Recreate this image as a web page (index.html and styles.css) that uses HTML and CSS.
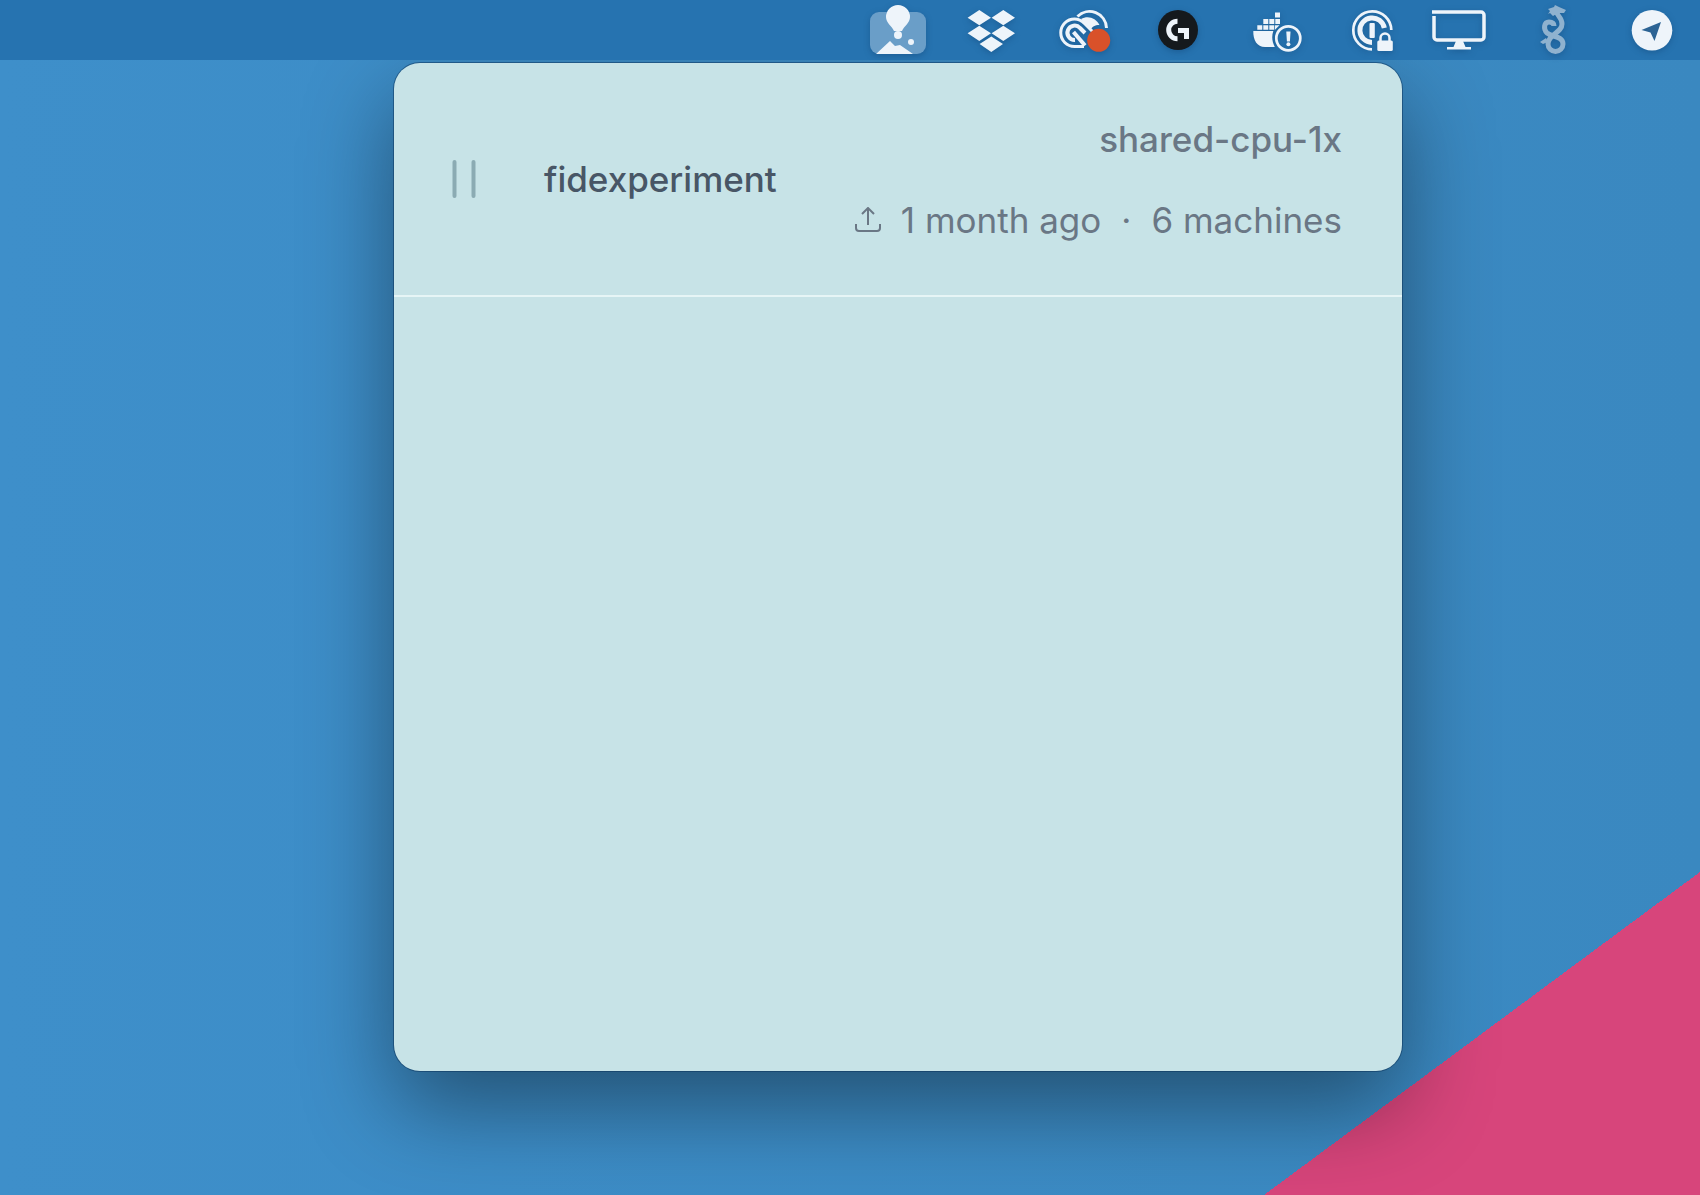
FILE: index.html
```html
<!DOCTYPE html>
<html lang="en">
<head>
    <meta charset="UTF-8">
    <meta name="viewport" content="width=device-width, initial-scale=1.0">
    <title>Menu bar apps</title>
    <link rel="stylesheet" href="styles.css">
</head>
<body>
    <header class="menubar">
        <!-- Balloon (open app) -->
        <button class="menubar-item" aria-label="Apps">
            <svg viewBox="0 0 64 60">
                <rect x="2" y="12" width="56" height="42" rx="9" fill="#6a9ec8"/>
                <path d="M8 54L22 41l5 5 5-1 13 9z"/>
                <path d="M30 5a12 12 0 0 1 12 12c0 6-6 9-8 14h-8c-2-5-8-8-8-14A12 12 0 0 1 30 5z"/>
                <circle cx="30" cy="35" r="4"/>
                <circle cx="43" cy="42" r="3"/>
            </svg>
        </button>
        <!-- Dropbox -->
        <button class="menubar-item" aria-label="Dropbox">
            <svg viewBox="0 0 64 60">
                <path d="M17.300 10l11.700 7.700-11.700 7.600-11.700-7.600zM41.300 10L53 17.700l-11.700 7.600-11.700-7.600zM17.300 25.700L29 33.300 17.300 41 5.600 33.300zM41.300 25.700L53 33.300 41.300 41l-11.700-7.700zM29.300 36.500L41 44l-11.700 8-11.700-8z"/>
            </svg>
        </button>
        <!-- Creative Cloud -->
        <button class="menubar-item" aria-label="Creative Cloud">
            <svg viewBox="0 0 64 60">
                <g fill="none" stroke="#eef4fa" stroke-width="3">
                    <path d="M28 46.500H18.500a13.700 13.700 0 0 1 0-27.500c4 0 7 1.500 10 4.500l8 8"/>
                    <path d="M21.500 16.500A17 17 0 0 1 50.500 28"/>
                    <path d="M19 40a7.200 7.200 0 1 1 5-12l5 5" stroke-width="4"/>
                    <path d="M17.500 32L29 45.500" stroke-width="4"/>
                </g>
                <path d="M25 19c7-4 15-1 18.500 6-5 0-7 2-8.500 4z"/>
                <circle cx="42.700" cy="40.300" r="11.500" fill="#d9512a"/>
            </svg>
        </button>
        <!-- Logitech G Hub -->
        <button class="menubar-item" aria-label="G Hub">
            <svg viewBox="0 0 64 60">
                <circle cx="28" cy="30" r="20" fill="#15191d"/>
                <path d="M27.500 18.700a11.300 11.300 0 0 0 0 22.600v-5a6.300 6.300 0 0 1 0-12.600zM28 28h11v11h-5v-6h-6z"/>
            </svg>
        </button>
        <!-- Docker -->
        <button class="menubar-item" aria-label="Docker">
            <svg viewBox="0 0 64 60">
                <path d="M13.300 25.300h5v4.400h-5zM19.300 25.300h5v4.400h-5zM25.300 25.300h5v4.400h-5zM31 25.300h4.500l-4.500 4.400zM19.300 19h5v5h-5zM25.300 19h5v5h-5zM31.300 19h4.700v5h-4.700zM31 12.500h5v5h-5z"/>
                <path d="M9.300 31h20c-2 6-1 11 1.500 16H21C13 47 9 40 9.300 31z"/>
                <circle cx="44.300" cy="38.300" r="12" fill="none" stroke="#eef4fa" stroke-width="2.700"/>
                <path d="M42.300 31.500h4.200l-.6 10h-3z"/>
                <circle cx="44.400" cy="44.300" r="2"/>
            </svg>
        </button>
        <!-- 1Password -->
        <button class="menubar-item" aria-label="1Password">
            <svg viewBox="0 0 64 60">
                <path d="M53.300 30A19 19 0 1 0 34 49.300" fill="none" stroke="#eef4fa" stroke-width="2.700"/>
                <path d="M46.300 28A12.300 12.300 0 1 0 34 42.500" fill="none" stroke="#eef4fa" stroke-width="5"/>
                <rect x="31.500" y="23" width="5.300" height="15" rx="1"/>
                <path d="M42.500 41v-3a4.500 4.500 0 0 1 9 0v3" fill="none" stroke="#eef4fa" stroke-width="2.500"/>
                <rect x="39.300" y="40.500" width="15.500" height="10.500" rx="1.500"/>
            </svg>
        </button>
        <!-- Display -->
        <button class="menubar-item" aria-label="Display">
            <svg viewBox="0 0 64 60">
                <path d="M0 12h49a3 3 0 0 1 3 3v22a3 3 0 0 1-3 3H5a3 3 0 0 1-3-3V16" fill="none" stroke="#eef4fa" stroke-width="3.500"/>
                <path d="M24 41h7l2.500 6H39v2.500H15V47h6.500z"/>
            </svg>
        </button>
        <!-- Wireguard -->
        <button class="menubar-item" aria-label="Wireguard">
            <svg viewBox="0 0 64 60">
                <path d="M30 11c1 5 6 6 6 13 0 9-14 10-14 20a7.500 7.500 0 0 0 15 0c0-8-11-7-16-11-4-4-3-11 2-11 3 0 5 1 5 4" fill="none" stroke="#8fb2cf" stroke-width="5"/>
                <path d="M22 9l6-2 1-2 4 2 7 3-2 3-6 0-5 3-3-3-2 1 2-3zM14 42l6-4 2 4-5 2z" fill="#8fb2cf"/>
            </svg>
        </button>
        <!-- Telegram -->
        <button class="menubar-item" aria-label="Telegram">
            <svg viewBox="0 0 64 60">
                <circle cx="32" cy="30.300" r="20.300"/>
                <path d="M41 22l-6.500 19-4-8.500L21.500 30z" fill="#2c6394"/>
            </svg>
        </button>
    </header>

    <main class="desktop">
        <section class="popover">
            <div class="app-row">
                <svg class="pause-icon" viewBox="0 0 24 38">
                    <path d="M2.500 2v34M21.500 2v34"/>
                </svg>
                <span class="app-name">fidexperiment</span>
                <div class="app-info">
                    <span class="app-size">shared-cpu-1x</span>
                    <div class="app-meta">
                        <svg class="upload-icon" viewBox="0 0 26 26">
                            <path d="M13 18V1M7 7l6-6 6 6M1 17v4a3 3 0 0 0 3 3h18a3 3 0 0 0 3-3v-4"/>
                        </svg>
                        <span>1 month ago</span>
                        <span>·</span>
                        <span>6 machines</span>
                    </div>
                </div>
            </div>
        </section>
    </main>
</body>
</html>
```
FILE: styles.css
```css
* {
    box-sizing: border-box;
}
body {
    margin: 0;
    min-height: 100vh;
    display: flex;
    flex-direction: column;
    font-family: Inter, "Liberation Sans", sans-serif;
    /* pink corner over the blue wallpaper */
    background:
        linear-gradient(to bottom right, transparent 50%, #d7457b 50%) right bottom / 436px 323px no-repeat,
        linear-gradient(to right, #3e8fca, #3a88c0);
}
.menubar {
    position: relative;
    z-index: 1;
    display: flex;
    justify-content: flex-end;
    gap: 30px;
    height: 60px;
    padding-right: 16px;
    background: #2673b0;
}
.menubar-item {
    width: 64px;
    height: 60px;
    padding: 0;
    border: none;
    background: none;
    cursor: pointer;
}
.menubar-item svg {
    display: block;
    width: 64px;
    height: 60px;
    fill: #eef4fa;
    filter: drop-shadow(0 2px 3px rgba(0, 30, 70, 0.25));
}
.desktop {
    flex: 1;
    display: flex;
    justify-content: flex-end;
    align-items: flex-start;
    padding: 3px 298px 0 20px;
}
.popover {
    width: 100%;
    max-width: 1008px;
    min-height: 1008px;
    border-radius: 26px;
    background: #c7e3e7;
    box-shadow:
        0 0 0 1px rgba(10, 50, 90, 0.5),
        0 36px 90px rgba(0, 0, 0, 0.42);
}
.app-row {
    display: flex;
    align-items: center;
    height: 234px;
    padding: 0 60px 0 58px;
    border-bottom: 2px solid #e6f5f6;
    font-size: 35px;
    line-height: 40px;
    color: #6a7785;
}
.pause-icon {
    width: 24px;
    height: 38px;
    margin-right: 68px;
    fill: none;
    stroke: #8babb3;
    stroke-width: 4;
    stroke-linecap: round;
}
.app-name {
    font-weight: 500;
    color: #485666;
}
.app-info {
    display: flex;
    flex-direction: column;
    align-items: flex-end;
    gap: 41px;
    margin-left: auto;
}
.app-size {
    font-weight: 500;
}
.app-meta {
    display: flex;
    align-items: center;
    gap: 20px;
}
.upload-icon {
    width: 26px;
    height: 26px;
    fill: none;
    stroke: #6a7785;
    stroke-width: 2;
}
```
